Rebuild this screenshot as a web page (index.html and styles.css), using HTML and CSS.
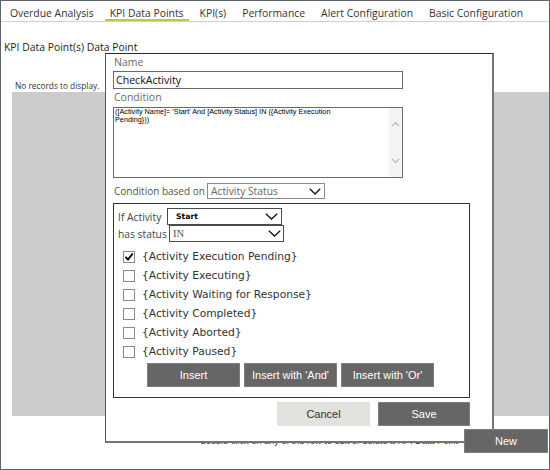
FILE: index.html
```html
<!DOCTYPE html>
<html>
<head>
<meta charset="utf-8">
<link rel="stylesheet" href="styles.css">
</head>
<body>
<div class="frame">
  <nav class="tabs">
    <span class="tab">Overdue Analysis</span>
    <span class="tab active">KPI Data Points</span>
    <span class="tab">KPI(s)</span>
    <span class="tab">Performance</span>
    <span class="tab">Alert Configuration</span>
    <span class="tab">Basic Configuration</span>
  </nav>
  <div class="title">KPI Data Point(s) Data Point</div>
  <div class="norec">No records to display.</div>
  <div class="grid"></div>
  <div class="footer">
    <span class="hint">double click on any of the row to edit or delete a KPI Data Point</span>
    <button class="btn btn-dark btn-new">New</button>
  </div>

  <div class="dialog">
    <div class="lbl">Name</div>
    <div class="input">CheckActivity</div>
    <div class="lbl lbl-cond">Condition</div>
    <div class="textarea">
      <div class="ta-text">([Activity Name]= 'Start' And [Activity Status] IN ({Activity Execution<br>Pending}))</div>
      <div class="ta-scroll">
        <svg class="arrow" width="9" height="6" viewBox="0 0 9 6"><polyline points="1,5 4.5,1.5 8,5" fill="none" stroke="#b8b8b8" stroke-width="1.2"/></svg>
        <svg class="arrow" width="9" height="6" viewBox="0 0 9 6"><polyline points="1,1 4.5,4.5 8,1" fill="none" stroke="#b8b8b8" stroke-width="1.2"/></svg>
      </div>
    </div>
    <div class="based">
      <span class="based-lbl">Condition based on</span>
      <div class="select sel-based">
        <span class="sel-text">Activity Status</span>
        <svg class="chev" width="12" height="7" viewBox="0 0 12 7"><polyline points="0.8,0.8 6,6 11.2,0.8" fill="none" stroke="#111" stroke-width="1.3"/></svg>
      </div>
    </div>
    <div class="box">
      <div class="row">
        <span class="row-lbl">If Activity</span>
        <div class="select sel-start">
          <span class="sel-text-bold">Start</span>
          <svg class="chev" width="13" height="7" viewBox="0 0 13 7"><polyline points="0.8,0.8 6.5,6 12.2,0.8" fill="none" stroke="#111" stroke-width="1.3"/></svg>
        </div>
      </div>
      <div class="row">
        <span class="row-lbl row-lbl-wide">has status</span>
        <div class="select sel-status">
          <span class="sel-text-serif">IN</span>
          <svg class="chev" width="13" height="7" viewBox="0 0 13 7"><polyline points="0.8,0.8 6.5,6 12.2,0.8" fill="none" stroke="#111" stroke-width="1.3"/></svg>
        </div>
      </div>
      <ul class="checks">
        <li><span class="cb"><svg width="10" height="10" viewBox="0 0 10 10"><polyline points="1.5,4.8 4,7.5 8.8,1.5" fill="none" stroke="#000" stroke-width="1.8"/></svg></span>{Activity Execution Pending}</li>
        <li><span class="cb"></span>{Activity Executing}</li>
        <li><span class="cb"></span>{Activity Waiting for Response}</li>
        <li><span class="cb"></span>{Activity Completed}</li>
        <li><span class="cb"></span>{Activity Aborted}</li>
        <li><span class="cb"></span>{Activity Paused}</li>
      </ul>
      <div class="ins-row">
        <button class="btn btn-dark btn-ins">Insert</button>
        <button class="btn btn-dark btn-ins">Insert with 'And'</button>
        <button class="btn btn-dark btn-ins">Insert with 'Or'</button>
      </div>
    </div>
    <div class="actions">
      <button class="btn btn-light btn-cancel">Cancel</button>
      <button class="btn btn-dark btn-save">Save</button>
    </div>
  </div>
</div>
</body>
</html>
```

FILE: styles.css
```css
body {
  margin: 0;
  font-family: "Open Sans", "Noto Sans", sans-serif;
  background: #fff;
}

.frame {
  position: relative;
  width: 550px;
  height: 470px;
  box-sizing: border-box;
  border: 1px solid #5d646b;
  background: #fff;
  overflow: hidden;
}

/* tabs */
.tabs {
  display: flex;
  align-items: flex-end;
  height: 20px;
  padding-left: 1px;
  border-bottom: 1px solid #d5df78;
}

.tab {
  margin: 0 3px;
  padding: 0 5px;
  font-size: 10.4px;
  line-height: 16px;
  color: #333;
  white-space: nowrap;
}

.tab.active {
  box-shadow: inset 0 -2px #bccd3c;
}

.title {
  margin: 17px 0 0 3px;
  font-size: 10.4px;
  line-height: 16px;
  color: #222;
}

.norec {
  margin: 25px 0 0 14px;
  font-size: 8.3px;
  line-height: 12px;
  color: #333;
}

.grid {
  margin-left: 11px;
  height: 324px;
  background: #cccccc;
}

.footer {
  display: flex;
  justify-content: flex-end;
  align-items: center;
  gap: 6px;
  margin-top: 13px;
  padding-right: 1px;
}

.hint {
  font-family: "Liberation Sans", Arial, sans-serif;
  font-size: 9.2px;
  line-height: 12px;
  color: #333;
}

/* buttons */
.btn {
  box-sizing: border-box;
  height: 24px;
  margin: 0;
  padding: 0;
  font-family: "Liberation Sans", Arial, sans-serif;
  font-size: 11px;
  cursor: pointer;
}

.btn-dark {
  background: #666666;
  color: #fff;
  border: 1px solid #7e7e7e;
}

.btn-light {
  background: #e1e1dd;
  color: #333;
  border: none;
}

.btn-new {
  position: relative;
  z-index: 3;
  width: 84px;
}

.btn-ins { width: 93px; }
.btn-cancel { width: 93px; }
.btn-save { width: 92px; }

/* dialog */
.dialog {
  position: absolute;
  left: 104px;
  top: 52px;
  z-index: 2;
  box-sizing: border-box;
  width: 389px;
  height: 390px;
  padding: 1px 0 0 7px;
  background: #fff;
  border-top: 1px solid #2a2a2a;
  border-left: 1px solid #555;
  border-right: 2px solid #747474;
  border-bottom: 2px solid #747474;
}

.lbl {
  font-size: 10.5px;
  line-height: 15px;
  color: #6b6b6b;
  padding-left: 1px;
}

.lbl-cond {
  margin-top: 1px;
}

.input {
  box-sizing: border-box;
  width: 290px;
  height: 18px;
  margin-top: 1px;
  padding-left: 2px;
  border: 1px solid #6a6a6a;
  font-size: 10.6px;
  line-height: 16px;
  color: #111;
}

.textarea {
  display: flex;
  box-sizing: border-box;
  width: 290px;
  height: 71px;
  margin-top: 2px;
  border: 1px solid #6a6a6a;
}

.ta-text {
  flex: 1;
  padding: 0 0 0 1px;
  font-family: "Liberation Sans", Arial, sans-serif;
  font-size: 7.3px;
  line-height: 8px;
  color: #000;
}

.ta-scroll {
  width: 13px;
  display: flex;
  flex-direction: column;
  justify-content: space-between;
  align-items: center;
  padding: 13px 0;
  background: #f4f4f4;
}

.based {
  display: flex;
  align-items: center;
  height: 16px;
  margin-top: 5px;
}

.based-lbl {
  width: 93px;
  padding-left: 1px;
  font-size: 10px;
  color: #555;
  white-space: nowrap;
}

.select {
  box-sizing: border-box;
  display: flex;
  align-items: center;
  justify-content: space-between;
  padding-right: 3px;
  background: #fff;
}

.sel-based {
  width: 118px;
  height: 16px;
  border: 1px solid #8a8a8a;
  padding-left: 3px;
}

.sel-text {
  font-size: 10.3px;
  color: #666;
}

/* inner box */
.box {
  box-sizing: border-box;
  width: 357px;
  height: 195px;
  margin-top: 4px;
  padding: 4px 0 0 4px;
  border: 1px solid #333;
}

.row {
  display: flex;
  align-items: center;
  height: 17px;
}

.row-lbl {
  width: 49px;
  font-size: 10.3px;
  color: #444;
  white-space: nowrap;
}

.row-lbl-wide {
  width: 51px;
}

.sel-start {
  width: 115px;
  height: 17px;
  border: 1px solid #4a4a4a;
  padding-left: 8px;
}

.sel-status {
  width: 115px;
  height: 17px;
  border: 1px solid #4a4a4a;
  padding-left: 3px;
  padding-right: 2px;
}

.sel-text-bold {
  font-family: "DejaVu Sans", Verdana, sans-serif;
  font-weight: bold;
  font-size: 7.7px;
  color: #000;
}

.sel-text-serif {
  font-family: "Liberation Serif", "Times New Roman", serif;
  font-size: 10.5px;
  color: #555;
}

.checks {
  list-style: none;
  margin: 5px 0 0 0;
  padding: 0 0 0 5px;
}

.checks li {
  display: flex;
  align-items: center;
  height: 19px;
  font-family: "DejaVu Sans", Verdana, sans-serif;
  font-size: 10.7px;
  color: #333;
  white-space: nowrap;
}

.cb {
  box-sizing: border-box;
  width: 12px;
  height: 12px;
  margin-right: 7px;
  border: 1px solid #8a8a8a;
  background: #fff;
  display: flex;
  align-items: center;
  justify-content: center;
}

.ins-row {
  display: flex;
  gap: 4px;
  margin-top: 2px;
  padding-left: 29px;
}

.actions {
  display: flex;
  justify-content: flex-end;
  gap: 8px;
  width: 357px;
  margin-top: 4px;
}
```
